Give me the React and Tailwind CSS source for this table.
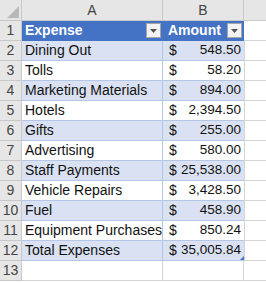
const rows = [
  ['Dining Out', '548.50'],
  ['Tolls', '58.20'],
  ['Marketing Materials', '894.00'],
  ['Hotels', '2,394.50'],
  ['Gifts', '255.00'],
  ['Advertising', '580.00'],
  ['Staff Payments', '25,538.00'],
  ['Vehicle Repairs', '3,428.50'],
  ['Fuel', '458.90'],
  ['Equipment Purchases', '850.24'],
  ['Total Expenses', '35,005.84'],
]

function FilterButton() {
  return (
    <div className="w-[15px] h-[15px] bg-[#f3f3f3] border border-[#a6a6a6] flex items-center justify-center">
      <svg width="7" height="4" viewBox="0 0 7 4">
        <path d="M0 0h7L3.5 4z" fill="#555" />
      </svg>
    </div>
  )
}

function RowHead({ n }) {
  return (
    <div className="h-[20px] bg-[#e6e6e6] border-r border-b border-[#c8c8c8] flex items-center justify-center text-[#444] text-[14px]">
      {n}
    </div>
  )
}

export default function App() {
  return (
    <div className="w-[266px] h-[283px] bg-white overflow-hidden text-[14px] text-[#111]" style={{ fontFamily: '"Liberation Sans", Arial, sans-serif' }}>
      <div className="grid grid-cols-[22px_141px_81px_22px]">
        {/* column header row */}
        <div className="h-[21px] bg-[#e6e6e6] border-r border-b border-[#c8c8c8] relative overflow-hidden">
          <svg className="absolute right-[2px] bottom-[2px]" width="12" height="12" viewBox="0 0 12 12">
            <path d="M12 0V12H0z" fill="#b8b8b8" />
          </svg>
        </div>
        <div className="h-[21px] bg-[#e6e6e6] border-r border-b border-[#c8c8c8] flex items-center justify-center text-[#444]">A</div>
        <div className="h-[21px] bg-[#e6e6e6] border-r border-b border-[#c8c8c8] flex items-center justify-center text-[#444]">B</div>
        <div className="h-[21px] bg-[#e6e6e6] border-b border-[#c8c8c8]" />

        {/* table header */}
        <RowHead n={1} />
        <div className="h-[20px] bg-[#4472c4] border-b border-[#4472c4] flex items-center justify-between pl-[3px] pr-[2px] text-white font-bold">
          <span>Expense</span>
          <FilterButton />
        </div>
        <div className="h-[20px] bg-[#4472c4] border-b border-[#4472c4] flex items-center justify-between pl-[5px] pr-[2px] text-white font-bold">
          <span>Amount</span>
          <FilterButton />
        </div>
        <div className="h-[20px] border-b border-[#d4d4d4]" />

        {rows.map(([name, amt], i) => {
          const band = i % 2 === 0 ? 'bg-[#d9e1f2]' : 'bg-white'
          return [
            <RowHead key={'h' + i} n={i + 2} />,
            <div key={'a' + i} className={`h-[20px] ${band} border-b border-r border-[#b4c6e7] flex items-center pl-[3px] whitespace-nowrap overflow-hidden`}>
              {name}
            </div>,
            <div key={'b' + i} className={`h-[20px] ${band} border-b border-[#b4c6e7] flex items-center justify-between pl-[6px] pr-[3px] relative text-[13.5px]`}>
              <span className="text-[14px]">$</span>
              <span>{amt}</span>
              {i === rows.length - 1 && (
                <svg className="absolute right-0 bottom-0" width="4" height="4" viewBox="0 0 4 4">
                  <path d="M4 0V4H0z" fill="#4472c4" />
                </svg>
              )}
            </div>,
            <div key={'c' + i} className="h-[20px] border-b border-l border-[#d4d4d4]" />,
          ]
        })}

        <RowHead n={13} />
        <div className="h-[20px] border-b border-r border-[#d4d4d4]" />
        <div className="h-[20px] border-b border-r border-[#d4d4d4]" />
        <div className="h-[20px] border-b border-[#d4d4d4]" />
      </div>
    </div>
  )
}
